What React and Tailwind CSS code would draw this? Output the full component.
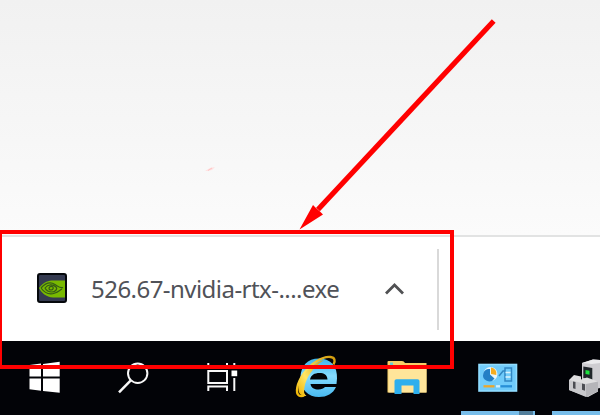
function NvidiaIcon() {
  return (
    <svg className="mb-[3px] ml-[37px] h-[30px] w-[30px] shrink-0" viewBox="37 272 30 30">
      <rect x="38" y="273" width="28" height="28" rx="2" fill="#343a50" stroke="#05080c" strokeWidth="2" />
      <path d="M39 287C44 280.500 49 279.500 53 279.500h12v17H53C46 296 41.500 292 39 287z" fill="#78b900" />
      <path d="M41 287c5-5.500 10-6 14-3.500 4 2.500 5.500 4 8 3M41 287c4 5.500 9 7 14 5 3-1 5-3 7-4M45 287c3-4 8-4 11-1 2 2-1 5-4 5-4 0-6-2-7-4zM49 287c1-2 3-2 4-1 1 2-1 3-2 3s-2-1-2-2z" fill="none" stroke="#345b16" strokeWidth="1.200" />
    </svg>
  );
}

function WindowsIcon() {
  return (
    <svg className="h-[74px] w-[90px] shrink-0" viewBox="0 341 90 74">
      <path d="M29.500 365l11.500-1.500v13H29.500zM43 364l16.700-2.200v14.700H43zM29.500 378.500H41v12.300l-11.500-1.500zM43 378.500h16.700v14.300L43 391z" fill="#fff" />
    </svg>
  );
}

function SearchIcon() {
  return (
    <svg className="h-[74px] w-[90px] shrink-0" viewBox="90 341 90 74">
      <circle cx="137.700" cy="373.300" r="9.700" fill="none" stroke="#f7f7f7" strokeWidth="2" />
      <path d="M130.800 380.400L119 392.300" stroke="#f7f7f7" strokeWidth="2.500" />
    </svg>
  );
}

function TaskViewIcon() {
  return (
    <svg className="h-[74px] w-[90px] shrink-0" viewBox="180 341 90 74">
      <g fill="none" stroke="#f8f8f8" strokeWidth="2">
        <rect x="208.300" y="371" width="18.700" height="12" />
        <path d="M208.300 363v4h18.700v-4M208.300 391v-4.500h18.700v4.500M234.300 363v5M234.300 378v13" />
      </g>
      <rect x="231.500" y="370.500" width="5.700" height="5.700" fill="#fff" />
    </svg>
  );
}

function ExplorerIcon() {
  return (
    <svg className="h-[74px] w-[90px] shrink-0" viewBox="270 341 90 74">
      <defs>
        <linearGradient id="ie-blue" x1="0" y1="0" x2="0" y2="1">
          <stop offset="0" stopColor="#3cb4e9" />
          <stop offset=".45" stopColor="#86dcff" />
          <stop offset="1" stopColor="#48b9ef" />
        </linearGradient>
        <linearGradient id="ie-gold" x1="0" y1="1" x2="1" y2="0">
          <stop offset="0" stopColor="#eeb300" />
          <stop offset=".4" stopColor="#ffe765" />
          <stop offset="1" stopColor="#d29b0b" />
        </linearGradient>
      </defs>
      <path fillRule="evenodd" d="M336.500 384H310.500c.5 3.800 4 5.500 8 5.500 3 0 5-1 6.500-2.500h11C333 393.700 327 397 319 397c-11 0-18.500-7.500-18.500-19 0-12 7-19.500 18.500-19.500 12 0 18.500 8 18 20zM310 379.500h17.500c-.3-4.800-3.500-6.500-8-6.500-5 0-8.500 2-9.500 6.500z" fill="url(#ie-blue)" />
      <path d="M333.500 364.500c2-3.500 1.500-7-3-7.500-8-1-20 7-27 17-6.500 9.500-8.500 19-4.500 21.500 1.700 1 4 .5 6-1" fill="none" stroke="url(#ie-gold)" strokeWidth="2.400" />
      <path d="M298.500 389c-1-9 10-24 25.500-29-11 7-18 18-19.500 27-1 7 0 7 2 9-5 0-8-2-8-7z" fill="url(#ie-gold)" />
    </svg>
  );
}

function FolderIcon() {
  return (
    <svg className="h-[74px] w-[90px] shrink-0" viewBox="360 341 90 74">
      <path d="M387.500 362q0-1 1-1H402q2 0 3 2h21.500v29.500h-39z" fill="#f5cf68" />
      <path d="M388.500 366h38v26.500h-38z" fill="#ffe59a" />
      <path d="M390 362.500h3v3h-3z" fill="#62cedb" />
      <path d="M394.500 381q0-1.800 2-1.800h21q2 0 2 1.800v13h-6v-8.500h-12v8.500h-7z" fill="#2eafed" />
    </svg>
  );
}

function ControlPanelIcon() {
  return (
    <svg className="h-[74px] w-[90px] shrink-0" viewBox="450 341 90 74">
      <rect x="479" y="364.500" width="37.500" height="26.500" fill="#70cbfa" stroke="#91ddff" strokeWidth="1.600" />
      <circle cx="490.500" cy="374" r="7" fill="#e7f5fb" />
      <path d="M490 369v5.500l4.500 4a6.200 6.200 0 1 1-4.500-9.500z" fill="#237fc6" />
      <path d="M491 374v-6.500a6 6 0 0 1 5.300 7.500z" fill="#f5ac20" />
      <path d="M499 376l4-5h2v-3h6.500v13H505v-11" fill="none" stroke="#3187c2" strokeWidth="1.500" />
      <path d="M505.500 372.500h5M505.500 377h5" stroke="#dcf3fc" strokeWidth="1.500" />
      <path d="M483.500 386.300h11" stroke="#eaa72d" strokeWidth="2.300" />
      <path d="M496 386.300h4" stroke="#cdefff" strokeWidth="2.300" />
      <path d="M500.500 386.300h11.500" stroke="#288fd7" strokeWidth="2.300" />
      <path d="M461 411h58v4h-58zM533 411h2v4h-2z" fill="#77bdea" />
      <path d="M519 411h14v4h-14z" fill="#527e9b" />
    </svg>
  );
}

function ServerIcon() {
  return (
    <svg className="h-[74px] w-[60px] shrink-0" viewBox="540 341 60 74">
      <path d="M582 363l11-3.500 7 .5V388l-9 2-9-5z" fill="#cecdd1" />
      <path d="M582 363l11-3.500 7 .5v3l-8 1z" fill="#ebebed" />
      <path d="M583.300 366.500l9 1.500v12l-9-2z" fill="#20262a" />
      <path d="M585.500 370l4 .8v4l-4-.8z" fill="#1ce13d" />
      <path d="M569 380l5-5 7 1.500v3l6-2 11 4v10l-10 5.500-19-7z" fill="#dededf" />
      <path d="M569 380l17 4v13l-17-7z" fill="#c9c9cc" />
      <path d="M586 384l12-2.500v10l-12 5.500z" fill="#b5b5b9" />
      <path d="M573 381.500l2.500.6v7l-2.500-.8zM582 383.500l3 .8v6.500l-3-1z" fill="#4b4d52" />
      <path d="M552 411h48v4h-48z" fill="#77bdea" />
    </svg>
  );
}

export default function App() {
  return (
    <div className="relative flex h-[415px] w-[600px] flex-col overflow-hidden bg-white">
      <main className="h-[235px] shrink-0 bg-linear-to-b from-[#f1f1f1] via-[#f6f6f6] to-[#fbfbfb]">
        <svg className="ml-[200px] h-[180px] w-5" viewBox="200 0 20 180">
          <path d="M205 171l5-3 5-1-3 3-5 1z" fill="#ffe0e0" />
          <path d="M208 170.500l4-2.500" stroke="#ffc4c4" />
        </svg>
      </main>
      <section className="flex h-[106px] shrink-0 items-center border-t-2 border-[#e2e3e3] bg-white">
        <NvidiaIcon />
        <span className="ml-6 block w-[250px] whitespace-nowrap font-['Noto_Sans','Open_Sans',sans-serif] text-[24px] leading-8 tracking-[-0.54px] text-[#505258]">
          526.67-nvidia-rtx-....exe
        </span>
        <svg className="ml-[42px] h-5 w-6" viewBox="383 279 24 20">
          <path d="M386 293.500l8.500-8.500 8.500 8.500" fill="none" stroke="#505153" strokeWidth="2.800" />
        </svg>
        <div className="ml-[30px] h-[81px] w-[2px] bg-[#d9d9d9]" />
      </section>
      <nav className="flex h-[74px] shrink-0 bg-[#020307]">
        <WindowsIcon />
        <SearchIcon />
        <TaskViewIcon />
        <ExplorerIcon />
        <FolderIcon />
        <ControlPanelIcon />
        <ServerIcon />
      </nav>
      <svg className="pointer-events-none absolute inset-0 h-[415px] w-[600px]" viewBox="0 0 600 415">
        <path d="M0 230h454v139H0zM2 234v131h448V234z" fill="#f00" fillRule="evenodd" />
        <path d="M493.700 21L318 209.500" stroke="#f00" strokeWidth="5.200" />
        <path d="M299.500 229.500l13.500-24.500 3 3 4 3.500 3 3z" fill="#f00" />
      </svg>
    </div>
  );
}
